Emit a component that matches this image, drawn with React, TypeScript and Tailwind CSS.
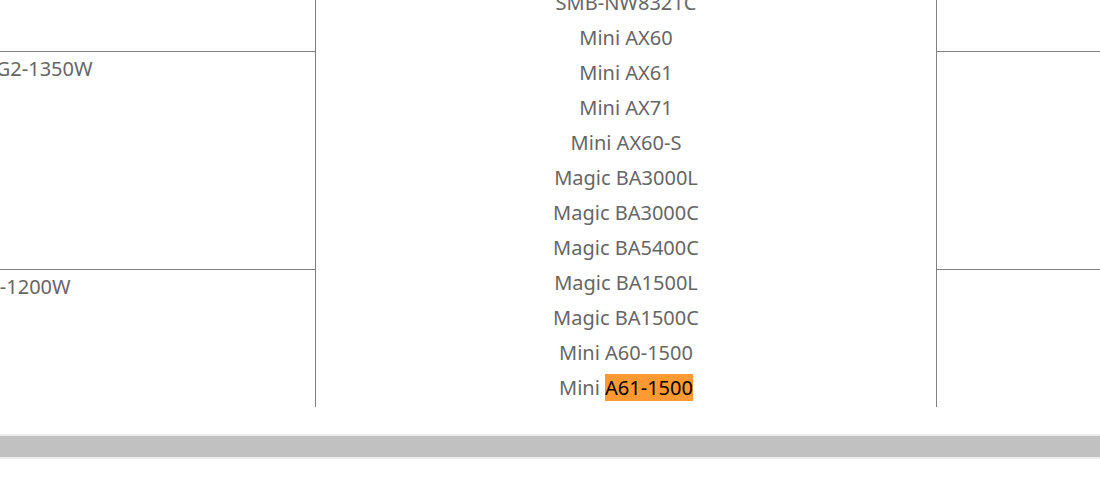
import React from "react"

const models = [
  "SMB-NW8320L",
  "SMB-NW8320C",
  "SMB-NW8321C",
  "Mini AX60",
  "Mini AX61",
  "Mini AX71",
  "Mini AX60-S",
  "Magic BA3000L",
  "Magic BA3000C",
  "Magic BA5400C",
  "Magic BA1500L",
  "Magic BA1500C",
  "Mini A60-1500",
]

function SideColumn({ top, bottom }: { top?: string; bottom?: string }) {
  return (
    <div className="flex flex-col justify-end">
      <div className="flex-1" />
      <div className="h-[218px] border-t border-[#808080] pl-2 whitespace-nowrap leading-[33px]">{top}</div>
      <div className="h-[138px] border-t border-[#808080] pl-2 whitespace-nowrap leading-[33px]">{bottom}</div>
    </div>
  )
}

export default function App() {
  return (
    <div
      className="w-[1100px] h-[497px] bg-white overflow-hidden text-[20px] leading-[35px] text-[#666]"
      style={{ fontFamily: '"Noto Sans", "Open Sans", sans-serif' }}
    >
      {/* table viewport, scrolled horizontally */}
      <div className="h-[407px] overflow-hidden flex flex-col justify-end">
        <div className="grid grid-cols-[416px_622px_300px] -ml-[101px] w-[1338px]">
          <SideColumn top="SMB-NW-G2-1350W" bottom="SMB-NWL-1200W" />
          <div className="border-x border-[#808080] flex flex-col items-center whitespace-nowrap pb-[2px]">
            {models.map((m) => (
              <div key={m}>{m}</div>
            ))}
            <div>
              Mini <span className="bg-[#ff9933] text-black">A61-1500</span>
            </div>
          </div>
          <SideColumn />
        </div>
      </div>

      {/* horizontal scrollbar */}
      <div className="mt-[27px] h-[25px] bg-[#ececec] py-[2px]">
        <div className="h-[21px] bg-[#c1c1c1]" />
      </div>
    </div>
  )
}
